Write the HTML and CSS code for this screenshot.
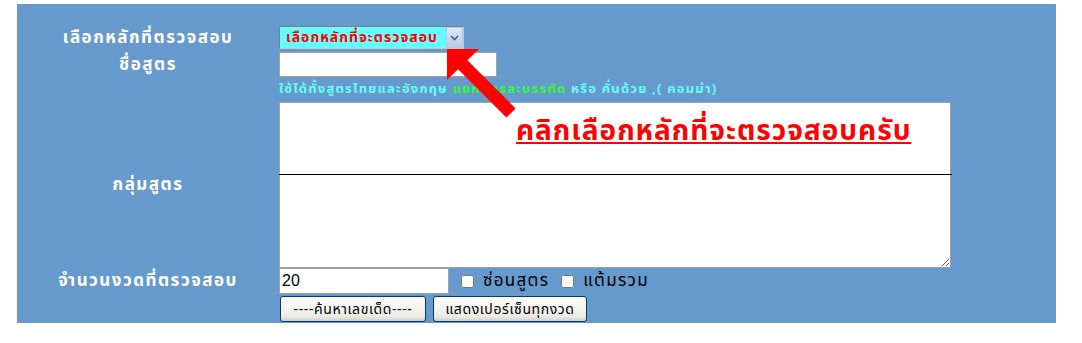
FILE: index.html
```html
<!DOCTYPE html>
<html lang="th">
<head>
	<meta charset="UTF-8">
	<title>ตรวจสอบสูตร</title>
	<link rel="stylesheet" href="styles.css">
</head>
<body>
	<form class="panel">
		<div class="label">เลือกหลักที่ตรวจสอบ</div>
		<div class="field">
			<span class="pick">
				<select class="pick-box">
					<option>เลือกหลักที่จะตรวจสอบ</option>
				</select>
				<span class="pick-btn">
					<svg width="9" height="6" viewBox="0 0 9 6"><path d="M1 1 L4.5 4.5 L8 1" fill="none" stroke="#4d6185" stroke-width="1.6"/></svg>
				</span>
			</span>
		</div>

		<div class="label label-name">ชื่อสูตร</div>
		<div class="field"><input type="text" class="name"></div>

		<div></div>
		<div class="hint">ใช้ได้ทั้งสูตรไทยและอังกฤษ <span class="green">แยกสูตรละบรรทัด</span> หรือ คั่นด้วย ,( คอมม่า)</div>

		<div class="label">กลุ่มสูตร</div>
		<div class="field area-wrap">
			<textarea class="group"></textarea>
			<div class="rule"></div>
		</div>

		<div class="label">จำนวนงวดที่ตรวจสอบ</div>
		<div class="field count-row">
			<input type="text" class="count" value="20">
			<label class="chk"><input type="checkbox"> ซ่อนสูตร</label>
			<label class="chk"><input type="checkbox"> แต้มรวม</label>
		</div>

		<div></div>
		<div class="field btn-row">
			<button type="button" class="btn btn-find">----ค้นหาเลขเด็ด----</button>
			<button type="button" class="btn btn-pct">แสดงเปอร์เซ็นทุกงวด</button>
		</div>

		<!-- คำแนะนำ -->
		<div class="note">คลิกเลือกหลักที่จะตรวจสอบครับ</div>
		<svg class="arrow" width="80" height="80" viewBox="0 0 80 80">
			<polygon points="0,0 32,0 0,31" fill="#ff0000"/>
			<line x1="10" y1="10" x2="64" y2="64" stroke="#ff0000" stroke-width="13"/>
		</svg>
	</form>
</body>
</html>
```

FILE: styles.css
```css
* {
	margin: 0;
	padding: 0;
	box-sizing: border-box;
}
body {
	background: #fff;
	font-family: Tahoma, "Noto Sans Thai", "DejaVu Sans", sans-serif;
}
.panel {
	position: relative;
	width: 1039px;
	margin: 4px 0 0 17px;
	padding: 22px 0 1px;
	background: #669acc;
	display: grid;
	grid-template-columns: 262px 1fr;
}
.label {
	color: #fff;
	font-weight: bold;
	font-size: 17px;
	line-height: 20px;
	letter-spacing: 1.5px;
	text-align: center;
	align-self: center;
}
.label-name {
	padding-top: 3px;
}
.field {
	display: flex;
	align-items: center;
}
.pick {
	display: flex;
	height: 23px;
	border: 1px solid #7f7f7f;
	border-color: #7f7f7f #c9c9c9 #c9c9c9 #7f7f7f;
	background: #66ffff;
}
.pick-box {
	appearance: none;
	-webkit-appearance: none;
	border: none;
	outline: none;
	width: 166px;
	height: 21px;
	padding-left: 6px;
	background: #66ffff;
	color: #ff0000;
	font-weight: bold;
	font-size: 14px;
	letter-spacing: 1px;
	font-family: Tahoma, "Noto Sans Thai", "DejaVu Sans", sans-serif;
}
.pick-btn {
	width: 17px;
	height: 21px;
	background: linear-gradient(#dfe8f6, #b9cbe8);
	border: 1px solid #b4c6e4;
	display: flex;
	align-items: center;
	justify-content: center;
}
.name {
	margin-top: 3px;
	width: 218px;
	height: 25px;
	border: 1px solid #a0a0a0;
	background: #fff;
}
.hint {
	height: 25px;
	line-height: 25px;
	color: #66ffff;
	font-weight: bold;
	font-size: 13px;
	letter-spacing: 1.2px;
}
.green {
	color: #33ff33;
}
.area-wrap {
	position: relative;
}
.group {
	width: 672px;
	height: 166px;
	border: 1px solid #a0a0a0;
	background: #fff;
	resize: both;
}
.rule {
	position: absolute;
	left: 0;
	top: 72px;
	width: 673px;
	height: 1px;
	background: #000;
}
.count {
	width: 170px;
	height: 26px;
	border: 1px solid #a0a0a0;
	padding-left: 2px;
	font-family: Arial, "Liberation Sans", sans-serif;
	font-size: 16px;
}
.chk {
	display: flex;
	align-items: center;
	gap: 9px;
	margin-left: 12px;
	font-size: 17px;
	line-height: 20px;
	letter-spacing: 1.3px;
	color: #000;
}
.chk input {
	width: 13px;
	height: 13px;
	margin: 0;
}
.btn-row {
	gap: 7px;
	margin-top: 2px;
	padding-left: 1px;
}
.btn {
	height: 26px;
	border: 1px solid #003c74;
	border-radius: 3px;
	background: linear-gradient(#ffffff, #ecebe6 80%, #d6d0c5);
	font-family: Tahoma, "Noto Sans Thai", "DejaVu Sans", sans-serif;
	font-size: 14px;
	letter-spacing: 0.6px;
	color: #000;
}
.btn-find {
	width: 146px;
}
.btn-pct {
	width: 154px;
}
.note {
	position: absolute;
	left: 499px;
	top: 106px;
	color: #ff0000;
	font-weight: bold;
	font-size: 28px;
	letter-spacing: 1px;
	text-decoration: underline;
}
.arrow {
	position: absolute;
	left: 430px;
	top: 45px;
}
```
